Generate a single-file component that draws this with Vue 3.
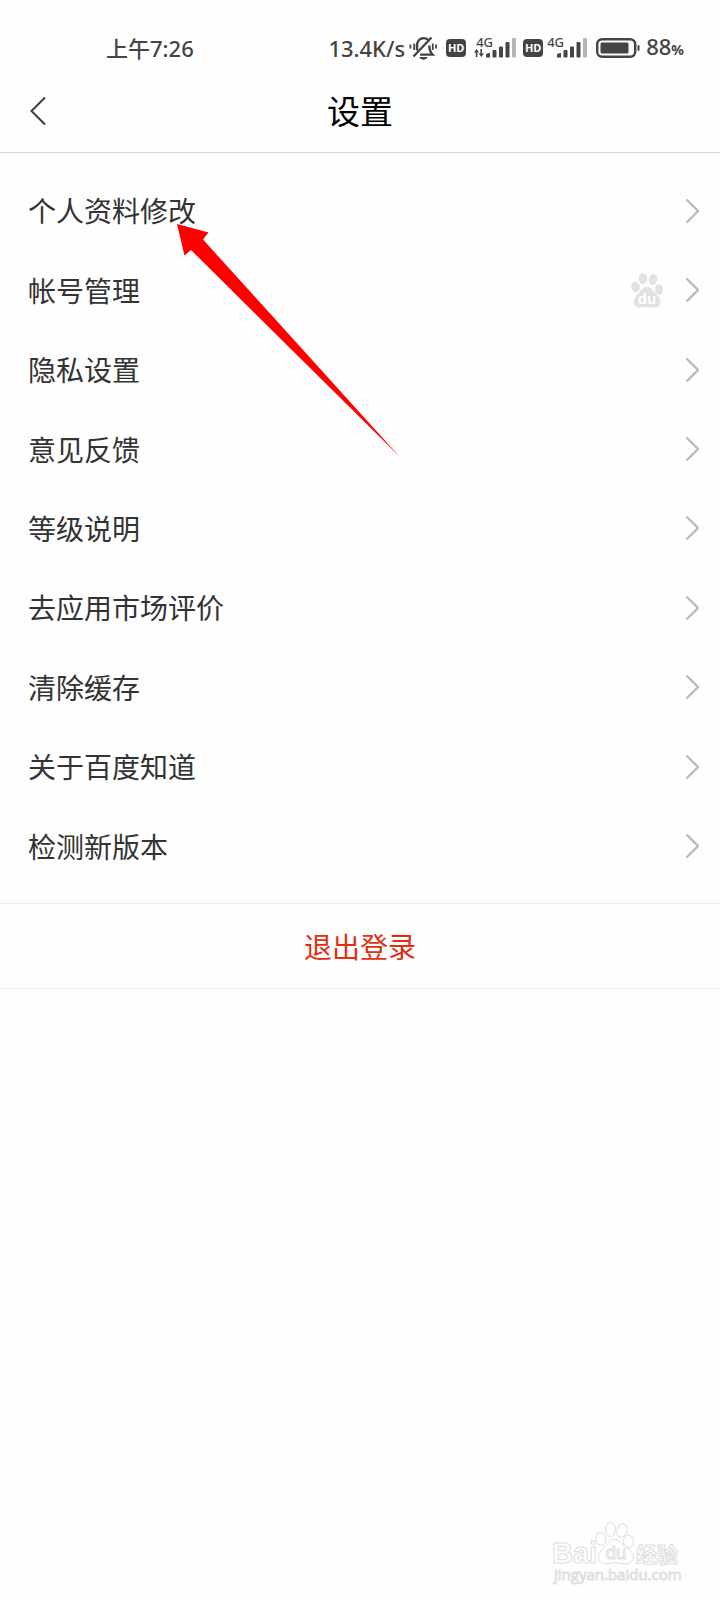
<template>
  <div class="page">
    <div class="status-bar">
      <span class="clock">上午7:26</span>
      <div class="indicators">
        <span class="speed">13.4K/s</span>
        <svg class="bell" viewBox="0 0 28 24" width="28" height="24" fill="none" stroke="#444" stroke-width="2.400">
          <path d="M8 14.500C8.200 13 8 12 8 10C8 5.500 10.500 2.500 14 2.200C16.500 2 18.500 2.800 20 4.500M20.300 9.500C20.300 14 21 16 23.500 18.600H11M4.500 20.500L22.500 1.500" />
          <path d="M5.200 7.500V14M1.400 8.500V12.500M23.800 7.500V14M27 8.500V12.500" stroke-width="1.800" />
          <path d="M10.500 21H18.500C17.500 24.500 11.500 24.500 10.500 21Z" fill="#444" stroke="none" />
        </svg>
        <template v-for="sim in sims" :key="sim.id">
          <span class="hd">HD</span>
          <div class="signal" :class="{ active: sim.active }">
            <span class="net">4G</span>
            <svg v-if="sim.active" class="traffic" viewBox="0 0 10 8" width="10" height="8">
              <path d="M2.500 0L5 3.500H3.400V8H1.800V3.500H0Z M7.300 8L4.800 4.500H6.400V0H8V4.500H10Z" fill="#444" />
            </svg>
            <svg class="bars" viewBox="0 0 30 20" width="30" height="20">
              <g fill="#444">
                <path d="M0 19.500V17Q0 15 4 15V19.500Z" />
                <rect x="6.500" y="12" width="4" height="7.500" rx="1" />
                <rect x="13" y="8.500" width="4" height="11" rx="1" />
                <rect x="19.500" y="4" width="4" height="15.500" rx="1" />
              </g>
              <rect x="26" y="0" width="4" height="19.500" rx="1" fill="#b5b5b5" />
            </svg>
          </div>
        </template>
        <svg class="battery" viewBox="0 0 44 20" width="44" height="20">
          <rect x="1.200" y="1.200" width="38" height="17.600" rx="5" fill="none" stroke="#444" stroke-width="2.400" />
          <rect x="4.500" y="4.500" width="28" height="11" rx="1.500" fill="#444" />
          <rect x="41.500" y="7" width="2" height="6" rx="1" fill="#444" />
        </svg>
        <span class="level">88<small>%</small></span>
      </div>
    </div>

    <header class="nav">
      <button class="back" type="button" aria-label="返回">
        <svg viewBox="0 0 16 30" width="16" height="30">
          <path d="M15 1.500L1.500 15L15 28.500" fill="none" stroke="#3c3c3c" stroke-width="2" />
        </svg>
      </button>
      <h1>设置</h1>
    </header>

    <main>
      <ul class="menu">
        <li v-for="item in items" :key="item.label">
          <button class="row" type="button">
            <span class="label">{{ item.label }}</span>
            <svg v-if="item.badge" class="paw" viewBox="0 0 32 35" width="32" height="35">
              <g fill="#e2e2e2">
                <ellipse cx="4.500" cy="14" rx="4.200" ry="5.300" transform="rotate(-12 4.500 14)" />
                <ellipse cx="12" cy="5.700" rx="4.200" ry="5.500" />
                <ellipse cx="22" cy="6.500" rx="4.200" ry="5.500" transform="rotate(14 22 6.500)" />
                <ellipse cx="28" cy="16.500" rx="4" ry="5.300" />
                <path d="M16 14C20.500 14 22 17.500 24.500 20.500C27.500 23.500 30 26 29.300 30.500C28.500 34.500 25 35 21.500 34.500C17.500 34 14.500 34 10.500 34.500C6.500 35 3.500 34 2.800 30.500C2 26 4.500 23.500 7.500 20.500C10 17.500 11.500 14 16 14Z" />
              </g>
              <text x="16" y="31" text-anchor="middle" fill="#fff" class="paw-text">du</text>
            </svg>
            <svg class="chevron" viewBox="0 0 14 26" width="14" height="26">
              <path d="M1.500 1.500L13 13L1.500 24.500" fill="none" stroke="#bbb" stroke-width="2.400" />
            </svg>
          </button>
        </li>
      </ul>
      <button class="logout" type="button">退出登录</button>
    </main>

    <footer class="watermark">
      <svg viewBox="0 0 132 66" width="132" height="66" fill="#fff" stroke="#dedede" stroke-width="1">
        <text x="0" y="42" class="wm-brand">Bai</text>
        <ellipse cx="49" cy="18" rx="5" ry="6.500" transform="rotate(-8 49 18)" />
        <ellipse cx="58.500" cy="8.500" rx="5" ry="7" />
        <ellipse cx="70" cy="9.500" rx="5" ry="7" transform="rotate(15 70 9.500)" />
        <ellipse cx="76.500" cy="20.500" rx="5" ry="6.300" />
        <path d="M63 18.500C68 18.500 70 23 74 26.500C78 30 82 32 81.500 37C80 42.500 74 43.500 70 42.500C66 41.500 60 41.500 56 42.500C51 43.500 47 42 46.500 37C46 32 49 30 52.500 26.500C56 23 57.500 18.500 63 18.500Z" />
        <text x="64" y="38" text-anchor="middle" class="wm-du">du</text>
        <text x="84" y="41" class="wm-cn">经验</text>
        <text x="2" y="59" class="wm-url">jingyan.baidu.com</text>
      </svg>
    </footer>

    <svg class="pointer" viewBox="0 0 222 232" width="222" height="232" aria-hidden="true">
      <path d="M0 0L31.500 8.500L26 15.500L222 232L14 26L7.500 31.500Z" fill="#fe0000" />
    </svg>
  </div>
</template>

<script setup>
const sims = [
  { id: 1, active: true },
  { id: 2, active: false },
];

const items = [
  { label: '个人资料修改' },
  { label: '帐号管理', badge: true },
  { label: '隐私设置' },
  { label: '意见反馈' },
  { label: '等级说明' },
  { label: '去应用市场评价' },
  { label: '清除缓存' },
  { label: '关于百度知道' },
  { label: '检测新版本' },
];
</script>

<style>
body {
  background: #fefefe;
}
</style>

<style scoped>
.page {
  position: relative;
  display: flex;
  flex-direction: column;
  min-height: 100vh;
  font-family: "Noto Sans", "Noto Sans CJK SC", sans-serif;
  color: #333;
}

button {
  padding: 0;
  border: 0;
  background: none;
  font: inherit;
  color: inherit;
  cursor: pointer;
}

svg {
  display: block;
  flex-shrink: 0;
}

.status-bar {
  display: flex;
  justify-content: space-between;
  align-items: center;
  height: 32px;
  padding: 32px 36px 8px 106px;
  font-size: 22px;
  line-height: 32px;
  font-weight: 500;
  color: #444;
}

.indicators {
  display: flex;
  align-items: center;
}

.bell {
  margin: 0 9px 0 4px;
}

.hd {
  width: 20px;
  height: 18px;
  border-radius: 4px;
  background: #444;
  color: #fff;
  font-size: 11px;
  font-weight: 700;
  line-height: 18px;
  text-align: center;
}

.signal {
  position: relative;
  display: flex;
  justify-content: flex-end;
  width: 30px;
  margin: 0 9px 0 14px;
}

.signal.active {
  margin: 0 7px 0 20px;
}

.net {
  position: absolute;
  top: -2px;
  left: -10px;
  font-size: 13px;
  line-height: 13px;
}

.traffic {
  position: absolute;
  left: -12px;
  bottom: 1px;
}

.battery {
  margin-right: 6px;
}

.level small {
  font-size: 14px;
  font-weight: 700;
}

.nav {
  position: relative;
  display: flex;
  justify-content: center;
  align-items: center;
  height: 80px;
  border-bottom: 1px solid #d9d9d9;
}

.back {
  position: absolute;
  left: 30px;
  top: 24px;
}

h1 {
  margin: 0;
  font-size: 33px;
  line-height: 40px;
  font-weight: 400;
  color: #000;
}

.menu {
  display: flex;
  flex-direction: column;
  min-height: 715px;
  margin: 0;
  padding: 18px 0 17px;
  list-style: none;
}

.menu li {
  display: flex;
  flex: 1;
}

.row {
  display: flex;
  align-items: center;
  width: 100%;
  padding: 0 21px 0 28px;
  font-size: 28px;
  line-height: 40px;
  text-align: left;
}

.label {
  flex: 1;
  padding-top: 1px;
}

.paw {
  margin-right: 22px;
}

.paw-text {
  font: 700 15px "Liberation Sans", sans-serif;
}

.logout {
  width: 100%;
  height: 86px;
  padding-top: 2px;
  border-top: 1px solid #eee;
  border-bottom: 1px solid #eee;
  font-size: 28px;
  line-height: 40px;
  color: #e03010;
}

.watermark {
  display: flex;
  justify-content: flex-end;
  margin-top: auto;
  padding: 0 36px 13px 0;
}

.wm-brand {
  font: 700 29px "Liberation Sans", sans-serif;
}

.wm-du {
  font: 400 19px "Liberation Sans", sans-serif;
}

.wm-cn {
  font: 700 21px "Noto Sans CJK SC", sans-serif;
}

.wm-url {
  font: 400 15px "Open Sans", sans-serif;
}

.pointer {
  position: absolute;
  left: 177px;
  top: 224px;
  pointer-events: none;
}
</style>
